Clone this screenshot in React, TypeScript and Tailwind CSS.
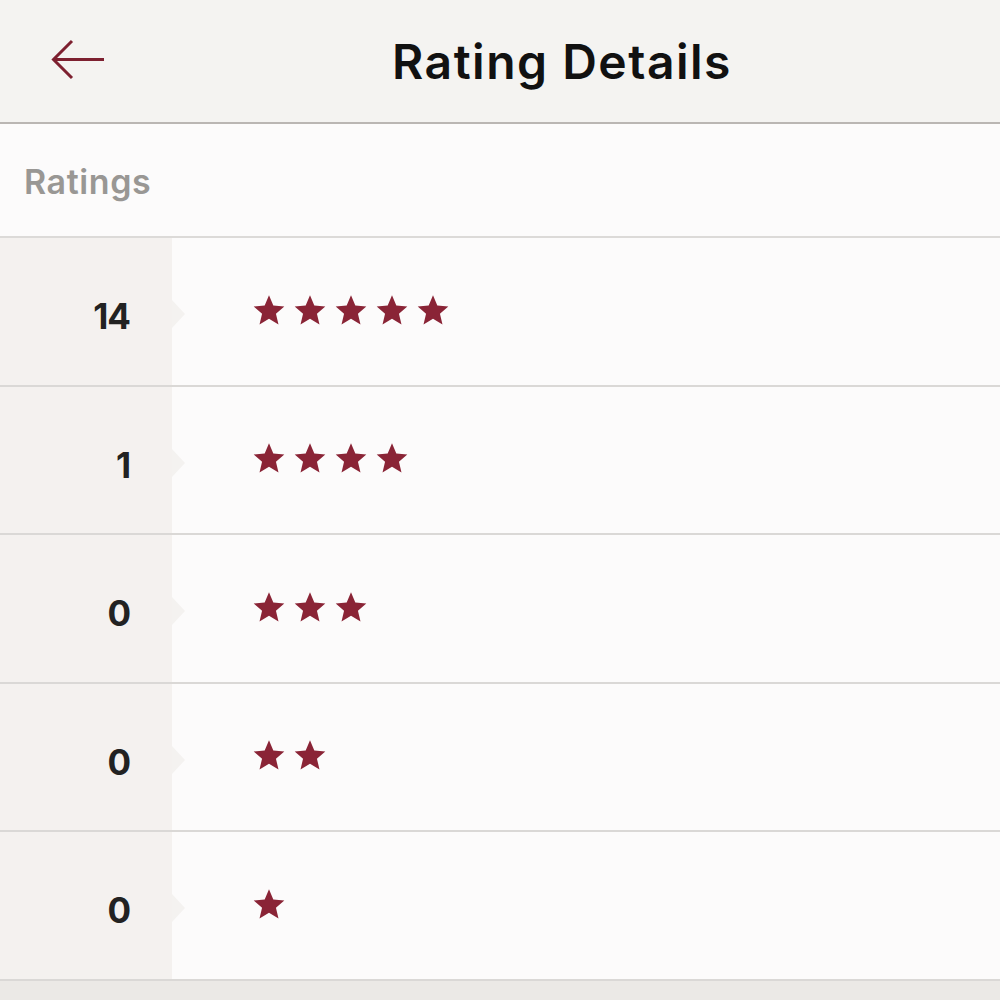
import React from "react";

const rows = [
  { count: 14, stars: 5 },
  { count: 1, stars: 4 },
  { count: 0, stars: 3 },
  { count: 0, stars: 2 },
  { count: 0, stars: 1 },
];

function Star() {
  return (
    <svg width="34" height="33" viewBox="0 0 24 23" className="shrink-0">
      <path
        d="M12 0.8l3.05 7.2 7.75 0.65-5.9 5.1 1.8 7.6L12 17.3l-6.7 4.05 1.8-7.6-5.9-5.1 7.75-0.65z"
        fill="#8a2436"
      />
    </svg>
  );
}

export default function App() {
  return (
    <div
      className="w-[1000px] h-[1000px] bg-[#ebe9e6] flex flex-col overflow-hidden"
      style={{ fontFamily: "Inter, 'Open Sans', sans-serif" }}
    >
      <div className="h-[124px] shrink-0 bg-[#f4f3f1] border-b-2 border-[#bab6b3] relative flex items-center justify-center">
        <svg
          className="absolute left-[50px] top-[38px]"
          width="56"
          height="44"
          viewBox="0 0 56 44"
          fill="none"
          stroke="#7d2030"
          strokeWidth="3"
        >
          <path d="M54 21.5H4" />
          <path d="M22 3L3.5 21.5L22 40" />
        </svg>
        <h1 className="text-[48px] font-semibold text-[#111111] ml-[124px] mt-[2px] tracking-[1.5px]">
          Rating Details
        </h1>
      </div>
      <div className="h-[114px] shrink-0 bg-[#fcfbfb] border-b-2 border-[#dcdad8] flex items-center px-[24px]">
        <span className="text-[34px] font-semibold text-[#999794] mt-[2px] tracking-[0.6px]">Ratings</span>
      </div>
      {rows.map((r, i) => (
        <div
          key={i}
          className="h-[148.5px] shrink-0 flex border-b-2 border-[#dad8d6] bg-[#fcfbfb]"
        >
          <div className="w-[172px] bg-[#f4f1ef] flex items-center justify-end pr-[42px] relative">
            <span className="text-[35px] font-bold text-[#222222] mt-[10px] tracking-[-1px]">{r.count}</span>
            <div className="absolute right-[-13px] top-[62px] w-0 h-0 border-y-[14px] border-y-transparent border-l-[13px] border-l-[#f4f2f0]" />
          </div>
          <div className="flex-1 flex items-center pl-[80px] gap-[7px] mb-[2px]">
            {Array.from({ length: r.stars }).map((_, j) => (
              <Star key={j} />
            ))}
          </div>
        </div>
      ))}
    </div>
  );
}
